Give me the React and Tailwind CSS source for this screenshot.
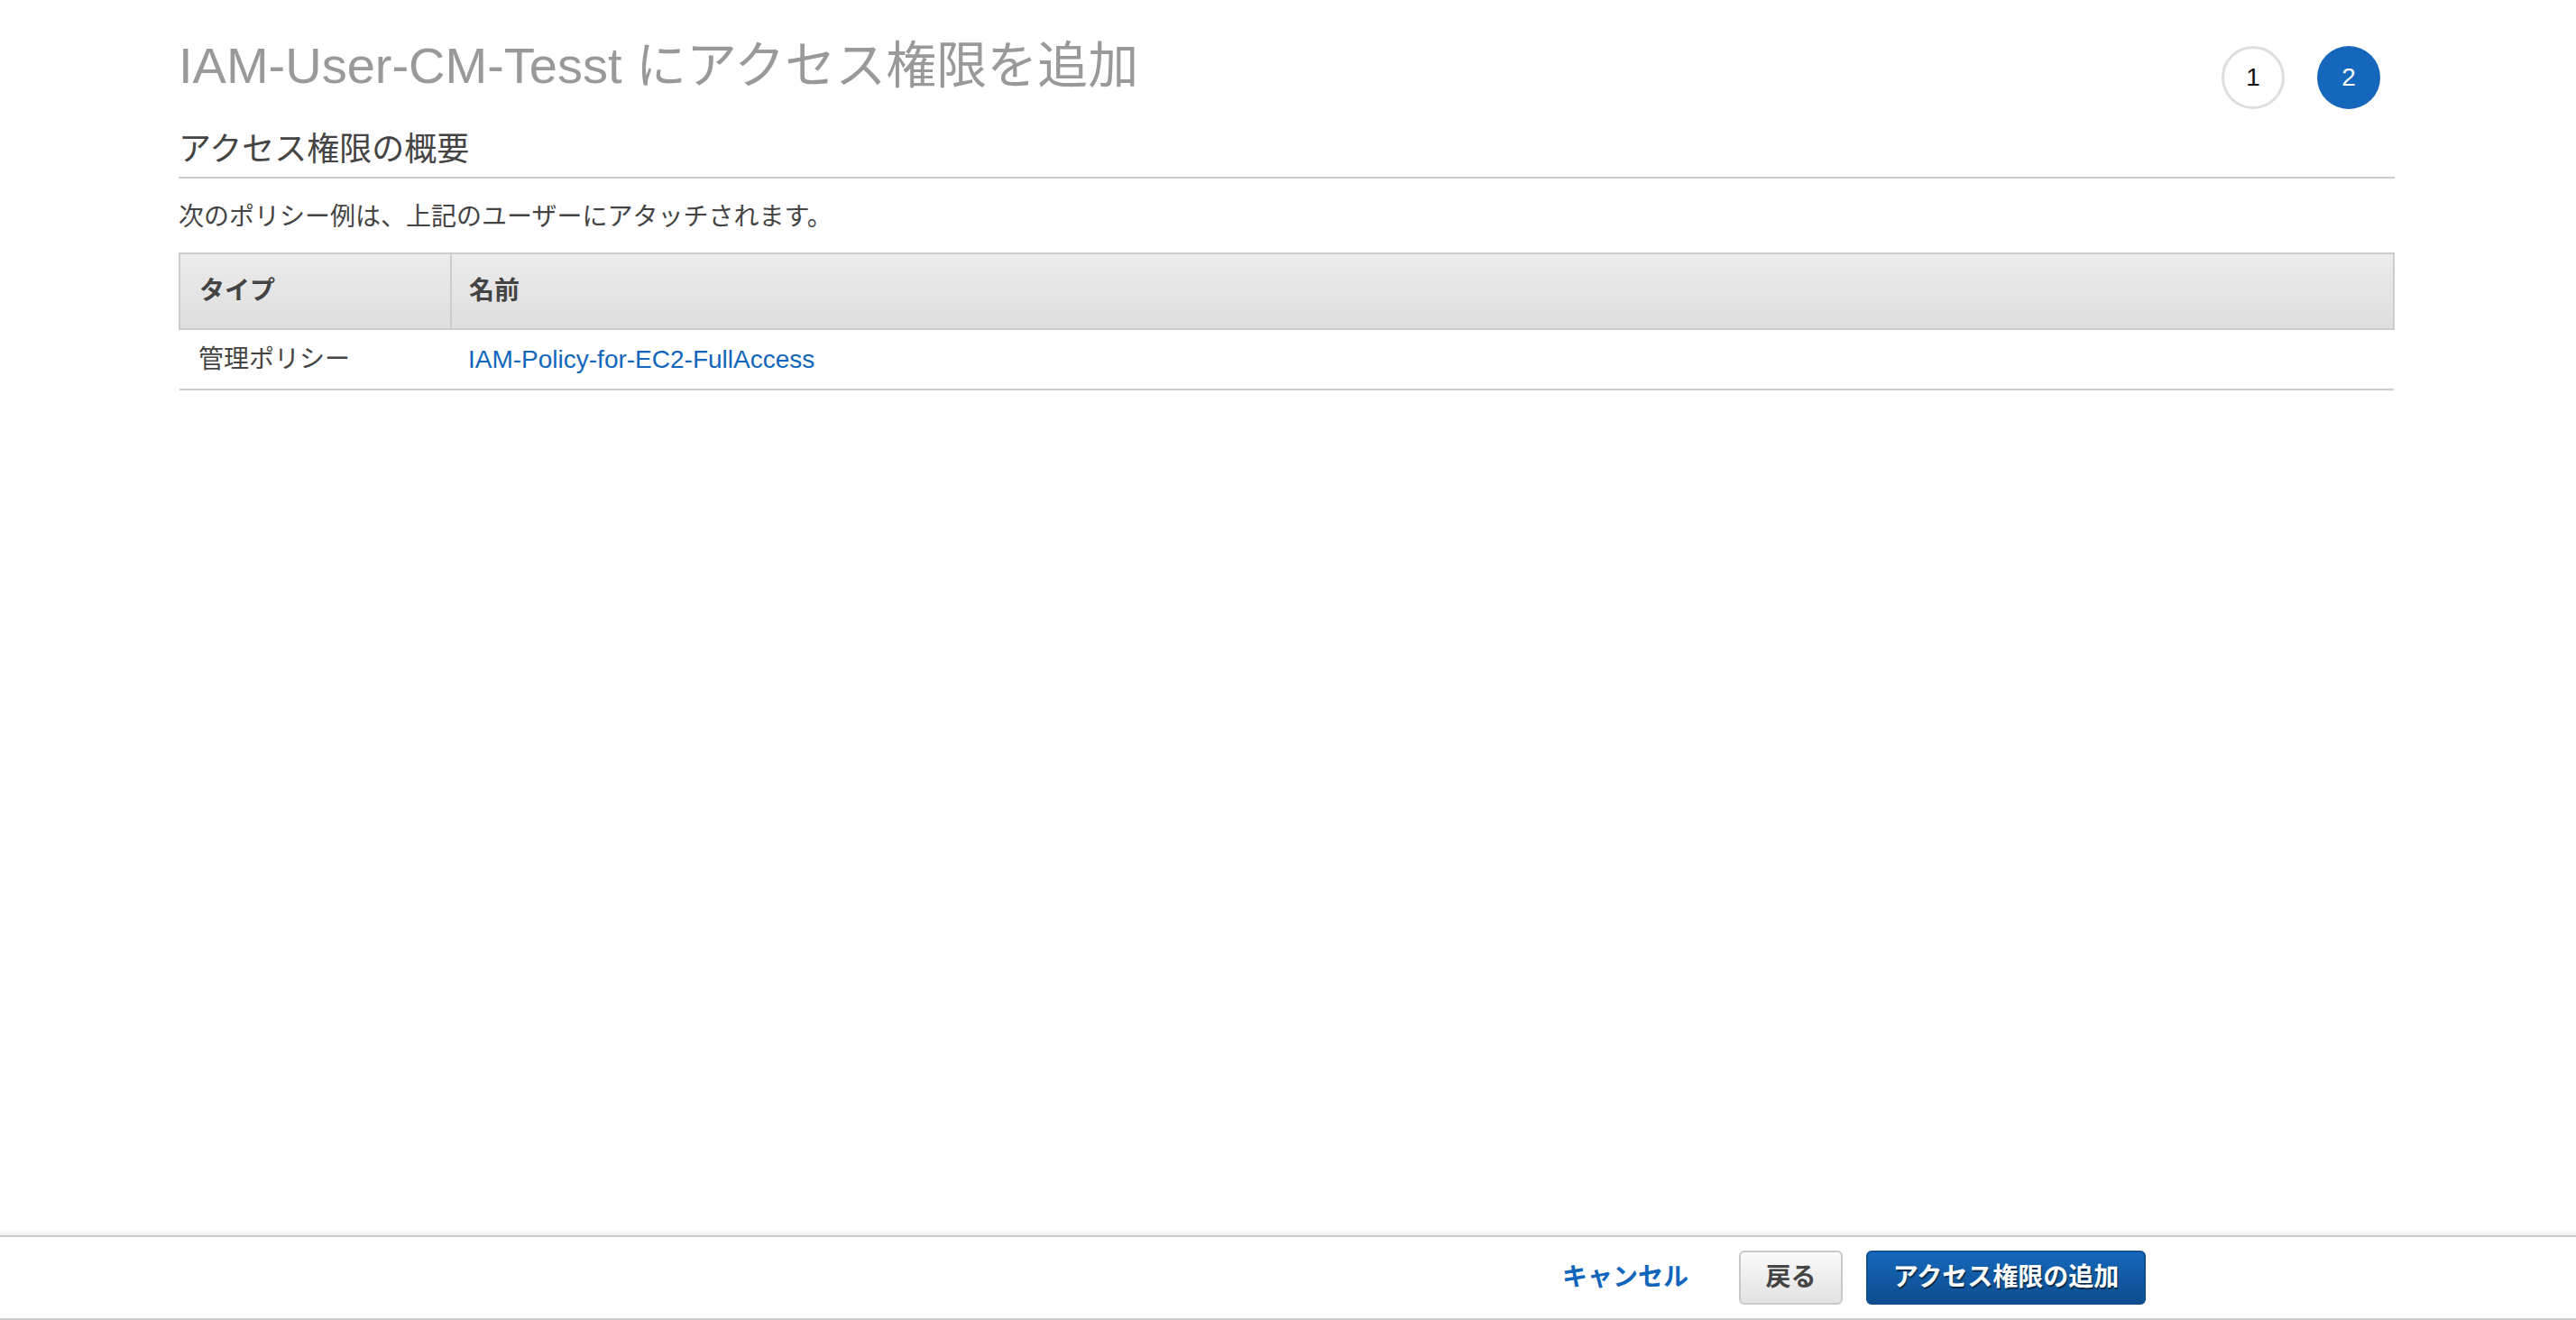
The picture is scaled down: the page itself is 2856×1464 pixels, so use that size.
// Add-permissions review step — summary of policies to attach, wizard step dots, footer actions.

import React from 'react';

const FONT = '[font-family:"Liberation_Sans","Noto_Sans_CJK_JP",sans-serif]';

const policies = [
  { type: '管理ポリシー', name: 'IAM-Policy-for-EC2-FullAccess' },
];

function StepDot({ n, active }) {
  return active ? (
    <div className="w-[70px] h-[70px] rounded-full bg-[#1567bb] flex items-center justify-center text-white text-[28px]">
      {n}
    </div>
  ) : (
    <div className="w-[70px] h-[70px] rounded-full border-[3px] border-[#dedede] bg-white flex items-center justify-center text-[#111] text-[28px]">
      {n}
    </div>
  );
}

function PolicyTable({ rows }) {
  return (
    <table className="w-full border-collapse text-[28px] text-[#444]">
      <thead>
        <tr className="bg-gradient-to-b from-[#ececec] to-[#dedede]">
          <th className="h-[84px] w-[301px] border-2 border-[#cccccc] text-left font-bold px-[21px]">タイプ</th>
          <th className="h-[84px] border-2 border-[#cccccc] text-left font-bold px-[19px]">名前</th>
        </tr>
      </thead>
      <tbody>
        {rows.map(r => (
          <tr key={r.name} className="border-b-2 border-[#cccccc]">
            <td className="h-[67px] px-[21px]">{r.type}</td>
            <td className="h-[67px] px-[19px]">
              <a href="#" className="text-[#1166bb]">{r.name}</a>
            </td>
          </tr>
        ))}
      </tbody>
    </table>
  );
}

export default function App() {
  return (
    <div className={`${FONT} h-[1464px] flex flex-col bg-white`}>
      <main className="flex-1 w-[2457px] ml-[198px] pt-[39px]">
        <div className="flex items-start justify-between">
          <h1 className="text-[56px] leading-[67px] text-[#999]">IAM-User-CM-Tesst にアクセス権限を追加</h1>
          <div className="flex gap-[36px] pr-[16px] pt-[12px]">
            <StepDot n={1} />
            <StepDot n={2} active />
          </div>
        </div>

        <h2 className="mt-[23px] text-[36px] leading-[44px] text-[#444] pb-[8px] border-b-2 border-[#cccccc]">
          アクセス権限の概要
        </h2>

        <p className="mt-[23px] text-[28px] leading-[40px] text-[#444]">
          次のポリシー例は、上記のユーザーにアタッチされます。
        </p>

        <div className="mt-[19px]">
          <PolicyTable rows={policies} />
        </div>
      </main>

      <footer className="h-[94px] border-t-2 border-b-2 border-[#cccccc] shadow-[0_-3px_5px_rgba(0,0,0,0.08)] flex items-center justify-end pr-[477px]">
        <a href="#" className="text-[28px] font-bold text-[#1166bb] mr-[56px]">キャンセル</a>
        <button className="h-[60px] w-[115px] rounded-[6px] border-2 border-[#c8c8c8] bg-gradient-to-b from-[#fafafa] to-[#e2e2e2] text-[28px] font-bold text-[#444] mr-[26px]">
          戻る
        </button>
        <button className="h-[60px] w-[310px] rounded-[6px] border-2 border-[#0f4f92] bg-gradient-to-b from-[#1568bb] to-[#0e4d8f] text-[28px] font-bold text-white [text-shadow:1px_2px_1px_rgba(0,0,0,0.55)]">
          アクセス権限の追加
        </button>
      </footer>
    </div>
  );
}
